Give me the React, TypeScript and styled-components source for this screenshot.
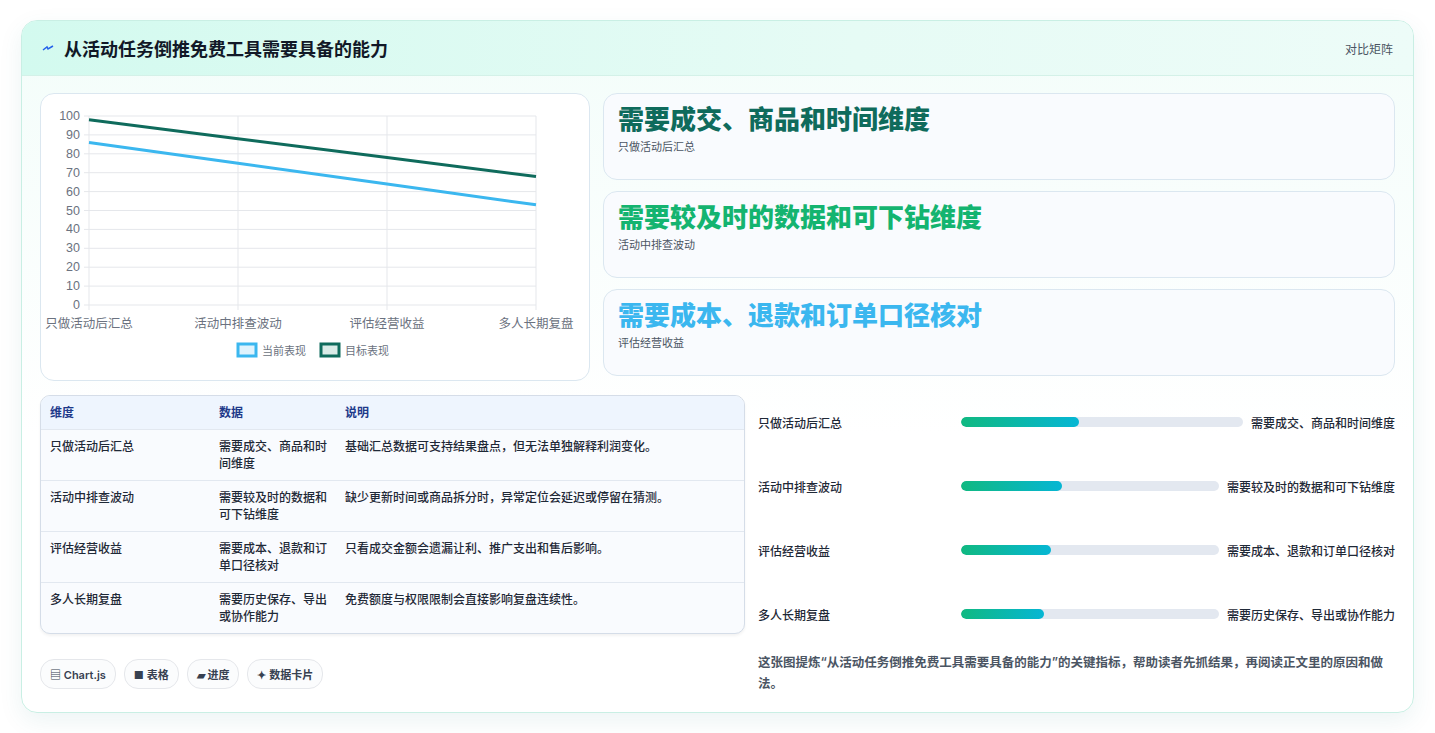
import React from 'react';
import styled, { createGlobalStyle } from 'styled-components';

const GlobalStyle = createGlobalStyle`
  body {
    margin: 0;
    background: #ffffff;
    font-family: "Inter", "Noto Sans CJK SC", sans-serif;
    color: #1f2937;
  }
`;

const Page = styled.div`
  padding: 20px 21px 22px 21px;
`;

const Card = styled.div`
  border: 1px solid #c9efe4;
  border-radius: 16px;
  background: linear-gradient(180deg, #f3fdfa 0%, #ffffff 60%);
  box-shadow: 0 8px 24px rgba(15, 118, 110, 0.08);
  overflow: hidden;
`;

const Header = styled.div`
  height: 54px;
  display: flex;
  align-items: center;
  justify-content: space-between;
  padding: 0 20px;
  background: linear-gradient(90deg, #d3faef 0%, #e6fbf5 60%, #edfcf8 100%);
  border-bottom: 1px solid #d4f1e8;
`;

const Title = styled.h1`
  margin: 0;
  display: flex;
  align-items: center;
  gap: 10px;
  font-size: 18px;
  font-weight: 700;
  color: #111827;
`;

const HeaderTag = styled.span`
  font-size: 12px;
  color: #4b5563;
`;

const Body = styled.div`
  padding: 17px 18px 18px 18px;
  display: flex;
  flex-direction: column;
  gap: 14px;
`;

const TopRow = styled.div`
  display: grid;
  grid-template-columns: 550px 1fr;
  gap: 13px;
`;

const Panel = styled.div`
  background: #ffffff;
  border: 1px solid #dbe7f0;
  border-radius: 14px;
`;

const ChartPanel = styled(Panel)`
  height: 286px;
`;

const StatList = styled.div`
  display: flex;
  flex-direction: column;
  gap: 11px;
`;

const StatCard = styled(Panel)<{ $color: string }>`
  height: 87px;
  box-sizing: border-box;
  padding: 10px 14px;
  background: #f9fbfe;
  h2 {
    margin: 0;
    font-size: 26px;
    font-weight: 800;
    color: ${p => p.$color};
    line-height: 32px;
  }
  p {
    margin: 2px 0 0;
    font-size: 11px;
    color: #4b5563;
  }
`;

const BottomRow = styled.div`
  display: grid;
  grid-template-columns: 705px 1fr;
  gap: 13px;
`;

const Left = styled.div`
  display: flex;
  flex-direction: column;
  gap: 25px;
`;

const Table = styled.div`
  border: 1px solid #d5dde8;
  border-radius: 10px;
  overflow: hidden;
  background: #f9fbfe;
  box-shadow: 0 2px 3px rgba(0, 0, 0, 0.05);
`;

const Row = styled.div<{ $head?: boolean }>`
  display: grid;
  grid-template-columns: 169px 126px 1fr;
  padding: ${p => (p.$head ? '8px 9px' : '8px 9px')};
  min-height: ${p => (p.$head ? '15px' : '34px')};
  font-size: 12px;
  line-height: 17px;
  color: ${p => (p.$head ? '#1e3a8a' : '#1f2937')};
  font-weight: ${p => (p.$head ? 600 : 500)};
  background: ${p => (p.$head ? '#eef5fe' : 'transparent')};
  border-bottom: 1px solid #e2e8f0;
  &:last-child { border-bottom: none; }
  & > span:nth-child(2) { padding-right: 14px; }
`;

const Pills = styled.div`
  display: flex;
  gap: 8px;
`;

const Pill = styled.span`
  font-size: 11px;
  font-weight: 600;
  color: #374151;
  padding: 6px 9px;
  border: 1px solid #e5e7eb;
  border-radius: 14px;
  background: #fbfcfd;
`;

const Progress = styled.div`
  display: flex;
  flex-direction: column;
  margin-top: -5px;
`;

const BarRow = styled.div`
  display: grid;
  grid-template-columns: 195px 1fr auto;
  align-items: center;
  gap: 8px;
  height: 64px;
  font-size: 12px;
  font-weight: 500;
  color: #1f2937;
`;

const Track = styled.div`
  height: 10px;
  border-radius: 5px;
  background: #e3e8f0;
  overflow: hidden;
`;

const Fill = styled.div`
  height: 100%;
  border-radius: 5px;
  background: linear-gradient(90deg, #10b981, #06b6d4);
`;

const Note = styled.p`
  margin: 6px 0 0;
  font-size: 12.5px;
  line-height: 21px;
  color: #4b5563;
  font-weight: 600;
`;

const items = [
  { name: '只做活动后汇总', need: '需要成交、商品和时间维度', desc: '基础汇总数据可支持结果盘点，但无法单独解释利润变化。', cur: 86, tgt: 98, pct: 42 },
  { name: '活动中排查波动', need: '需要较及时的数据和可下钻维度', desc: '缺少更新时间或商品拆分时，异常定位会延迟或停留在猜测。', cur: 75, tgt: 88, pct: 39 },
  { name: '评估经营收益', need: '需要成本、退款和订单口径核对', desc: '只看成交金额会遗漏让利、推广支出和售后影响。', cur: 64, tgt: 78, pct: 35 },
  { name: '多人长期复盘', need: '需要历史保存、导出或协作能力', desc: '免费额度与权限限制会直接影响复盘连续性。', cur: 53, tgt: 68, pct: 32 },
];

const stats = [
  { t: '需要成交、商品和时间维度', s: '只做活动后汇总', c: '#0f6b5c' },
  { t: '需要较及时的数据和可下钻维度', s: '活动中排查波动', c: '#14b470' },
  { t: '需要成本、退款和订单口径核对', s: '评估经营收益', c: '#3bb7ef' },
];

const LineChart: React.FC = () => {
  const x0 = 48, x1 = 495, y0 = 22, y1 = 211;
  const xs = [0, 1, 2, 3].map(i => x0 + ((x1 - x0) * i) / 3);
  const y = (v: number) => y1 - ((y1 - y0) * v) / 100;
  const line = (k: 'cur' | 'tgt') => items.map((d, i) => `${xs[i]},${y(d[k])}`).join(' ');
  return (
    <svg width="549" height="286" fontFamily="Liberation Sans, Noto Sans CJK SC, sans-serif">
      {[0, 10, 20, 30, 40, 50, 60, 70, 80, 90, 100].map(v => (
        <g key={v}>
          <line x1={x0 - 5} x2={x1} y1={y(v)} y2={y(v)} stroke="#e5e7eb" />
          <text x={x0 - 9} y={y(v) + 4} fontSize="12.5" fill="#6b7280" textAnchor="end">{v}</text>
        </g>
      ))}
      {xs.map((x, i) => (
        <g key={i}>
          <line x1={x} x2={x} y1={y0} y2={y1 + 5} stroke="#e5e7eb" />
          <text x={x} y={234} fontSize="12.5" fill="#6b7280" textAnchor="middle">{items[i].name}</text>
        </g>
      ))}
      <polyline points={line('tgt')} fill="none" stroke="#0f6b5c" strokeWidth="3" />
      <polyline points={line('cur')} fill="none" stroke="#3bb7ef" strokeWidth="3" />
      <rect x="197" y="250" width="18" height="12" fill="#dff3fd" stroke="#3bb7ef" strokeWidth="3" />
      <text x="221" y="261" fontSize="11" fill="#6b7280">当前表现</text>
      <rect x="280" y="250" width="18" height="12" fill="#d9ebe7" stroke="#0f6b5c" strokeWidth="3" />
      <text x="304" y="261" fontSize="11" fill="#6b7280">目标表现</text>
    </svg>
  );
};

export default function App() {
  return (
    <Page>
      <GlobalStyle />
      <Card>
        <Header>
          <Title>
            <svg width="12" height="10" viewBox="0 0 12 10">
              <path d="M1 7 L5 4 L6 6 L11 3" stroke="#2563eb" strokeWidth="1.5" fill="none" />
            </svg>
            从活动任务倒推免费工具需要具备的能力
          </Title>
          <HeaderTag>对比矩阵</HeaderTag>
        </Header>
        <Body>
          <TopRow>
            <ChartPanel>
              <LineChart />
            </ChartPanel>
            <StatList>
              {stats.map(s => (
                <StatCard key={s.t} $color={s.c}>
                  <h2>{s.t}</h2>
                  <p>{s.s}</p>
                </StatCard>
              ))}
            </StatList>
          </TopRow>
          <BottomRow>
            <Left>
              <Table>
                <Row $head>
                  <span>维度</span><span>数据</span><span>说明</span>
                </Row>
                {items.map(d => (
                  <Row key={d.name}>
                    <span>{d.name}</span><span>{d.need}</span><span>{d.desc}</span>
                  </Row>
                ))}
              </Table>
              <Pills>
                <Pill>▤ Chart.js</Pill>
                <Pill>■ 表格</Pill>
                <Pill>▰ 进度</Pill>
                <Pill>✦ 数据卡片</Pill>
              </Pills>
            </Left>
            <Progress>
              {items.map(d => (
                <BarRow key={d.name}>
                  <span>{d.name}</span>
                  <Track><Fill style={{ width: `${d.pct}%` }} /></Track>
                  <span>{d.need}</span>
                </BarRow>
              ))}
              <Note>这张图提炼“从活动任务倒推免费工具需要具备的能力”的关键指标，帮助读者先抓结果，再阅读正文里的原因和做法。</Note>
            </Progress>
          </BottomRow>
        </Body>
      </Card>
    </Page>
  );
}
